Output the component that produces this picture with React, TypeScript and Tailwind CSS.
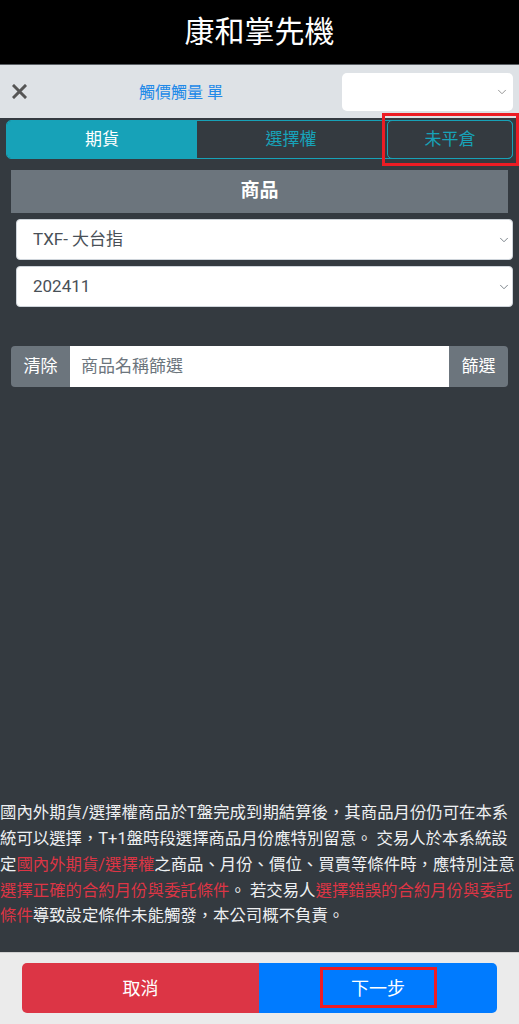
import { ChevronDown } from 'lucide-react'

const font = { fontFamily: 'Roboto, "Noto Sans CJK TC", sans-serif' }

function SelectBox({ value, className = '' }: { value: string; className?: string }) {
  return (
    <div className={`flex items-center justify-between bg-white rounded-[4px] border border-[#ced4da] ${className}`}>
      <span className="pl-[16px] text-[17px] text-[#495057]">{value}</span>
      <ChevronDown className="mr-[1px] w-[14px] h-[14px] text-[#6c757d]" strokeWidth={1.5} />
    </div>
  )
}

export default function App() {
  return (
    <div className="w-[519px] h-[1024px] flex flex-col bg-[#343a40] overflow-hidden" style={font}>
      {/* Title */}
      <div className="h-[64px] bg-black flex items-center justify-center">
        <span className="text-white text-[30px] leading-none">康和掌先機</span>
      </div>

      {/* Toolbar */}
      <div className="h-[54px] bg-[#dee2e6] flex items-center border-t border-[#5a5f64]">
        <svg className="ml-[12px] w-[15px] h-[15px]" viewBox="0 0 15 15">
          <path d="M2 2 L13 13 M13 2 L2 13" stroke="#555" strokeWidth="3" strokeLinecap="square" />
        </svg>
        <span className="ml-[112px] mt-[3px] text-[16px] text-[#2189e8]">觸價觸量 單</span>
        <div className="ml-auto mr-[6px] w-[171px] h-[38px] bg-white rounded-[5px] flex items-center justify-end">
          <ChevronDown className="mr-[4px] w-[14px] h-[14px] text-[#888]" strokeWidth={1.5} />
        </div>
      </div>

      {/* Body */}
      <div className="flex-1 flex flex-col">
        <div className="relative mx-[6px] mt-[2px] h-[39px] flex rounded-[5px] border border-[#17a2b8]">
          <div className="w-[190px] bg-[#17a2b8] rounded-l-[4px] flex items-center justify-center text-white text-[17px]">期貨</div>
          <div className="w-[188px] flex items-center justify-center text-[#17a2b8] text-[17px]">選擇權</div>
          <div className="flex-1 ml-[2px] -my-px -mr-px rounded-[5px] border border-[#17a2b8] flex items-center justify-center text-[#17a2b8] text-[17px]">未平倉</div>
          <div className="absolute left-[375px] -top-[8px] w-[137px] h-[53px] border-[3px] border-[#ec1c24]" />
        </div>

        <div className="mx-[11px] mt-[11px] h-[43px] bg-[#6c757d] flex items-center justify-center text-white text-[19px] font-bold">商品</div>

        <SelectBox value="TXF- 大台指" className="ml-[16px] mr-[6px] mt-[6px] h-[41px]" />
        <SelectBox value="202411" className="ml-[16px] mr-[6px] mt-[6px] h-[41px]" />

        <div className="mx-[11px] mt-[39px] h-[41px] flex rounded-[4px] overflow-hidden">
          <div className="w-[59px] bg-[#6c757d] flex items-center justify-center text-white text-[17px]">清除</div>
          <div className="flex-1 bg-white flex items-center pl-[11px] text-[17px] text-[#6c757d]">商品名稱篩選</div>
          <div className="w-[59px] bg-[#6c757d] flex items-center justify-center text-white text-[17px]">篩選</div>
        </div>

        <p className="mt-auto pb-[23px] text-[16.4px] leading-[25.7px] text-[#eef0f2]">
          國內外期貨/選擇權商品於T盤完成到期結算後，其商品月份仍可在本系統可以選擇，T+1盤時段選擇商品月份應特別留意。 交易人於本系統設定
          <span className="text-[#dc3545]">國內外期貨/選擇權</span>
          之商品、月份、價位、買賣等條件時，應特別注意
          <span className="text-[#dc3545]">選擇正確的合約月份與委託條件</span>
          。 若交易人
          <span className="text-[#dc3545]">選擇錯誤的合約月份與委託條件</span>
          導致設定條件未能觸發，本公司概不負責。
        </p>
      </div>

      {/* Footer */}
      <div className="h-[72px] bg-[#ebebeb] border-t border-[#d0d0d0] flex items-start pt-[10px] px-[22px]">
        <div className="flex-1 h-[50px] flex rounded-[5px] overflow-hidden">
          <div className="w-[237px] bg-[#dc3545] flex items-center justify-center text-white text-[18px]">取消</div>
          <div className="relative flex-1 bg-[#007bff] flex items-center justify-center text-white text-[18px]">
            下一步
            <div className="absolute left-[61px] top-[4px] w-[117px] h-[41px] border-[3px] border-[#ec1c24]" />
          </div>
        </div>
      </div>
    </div>
  )
}
